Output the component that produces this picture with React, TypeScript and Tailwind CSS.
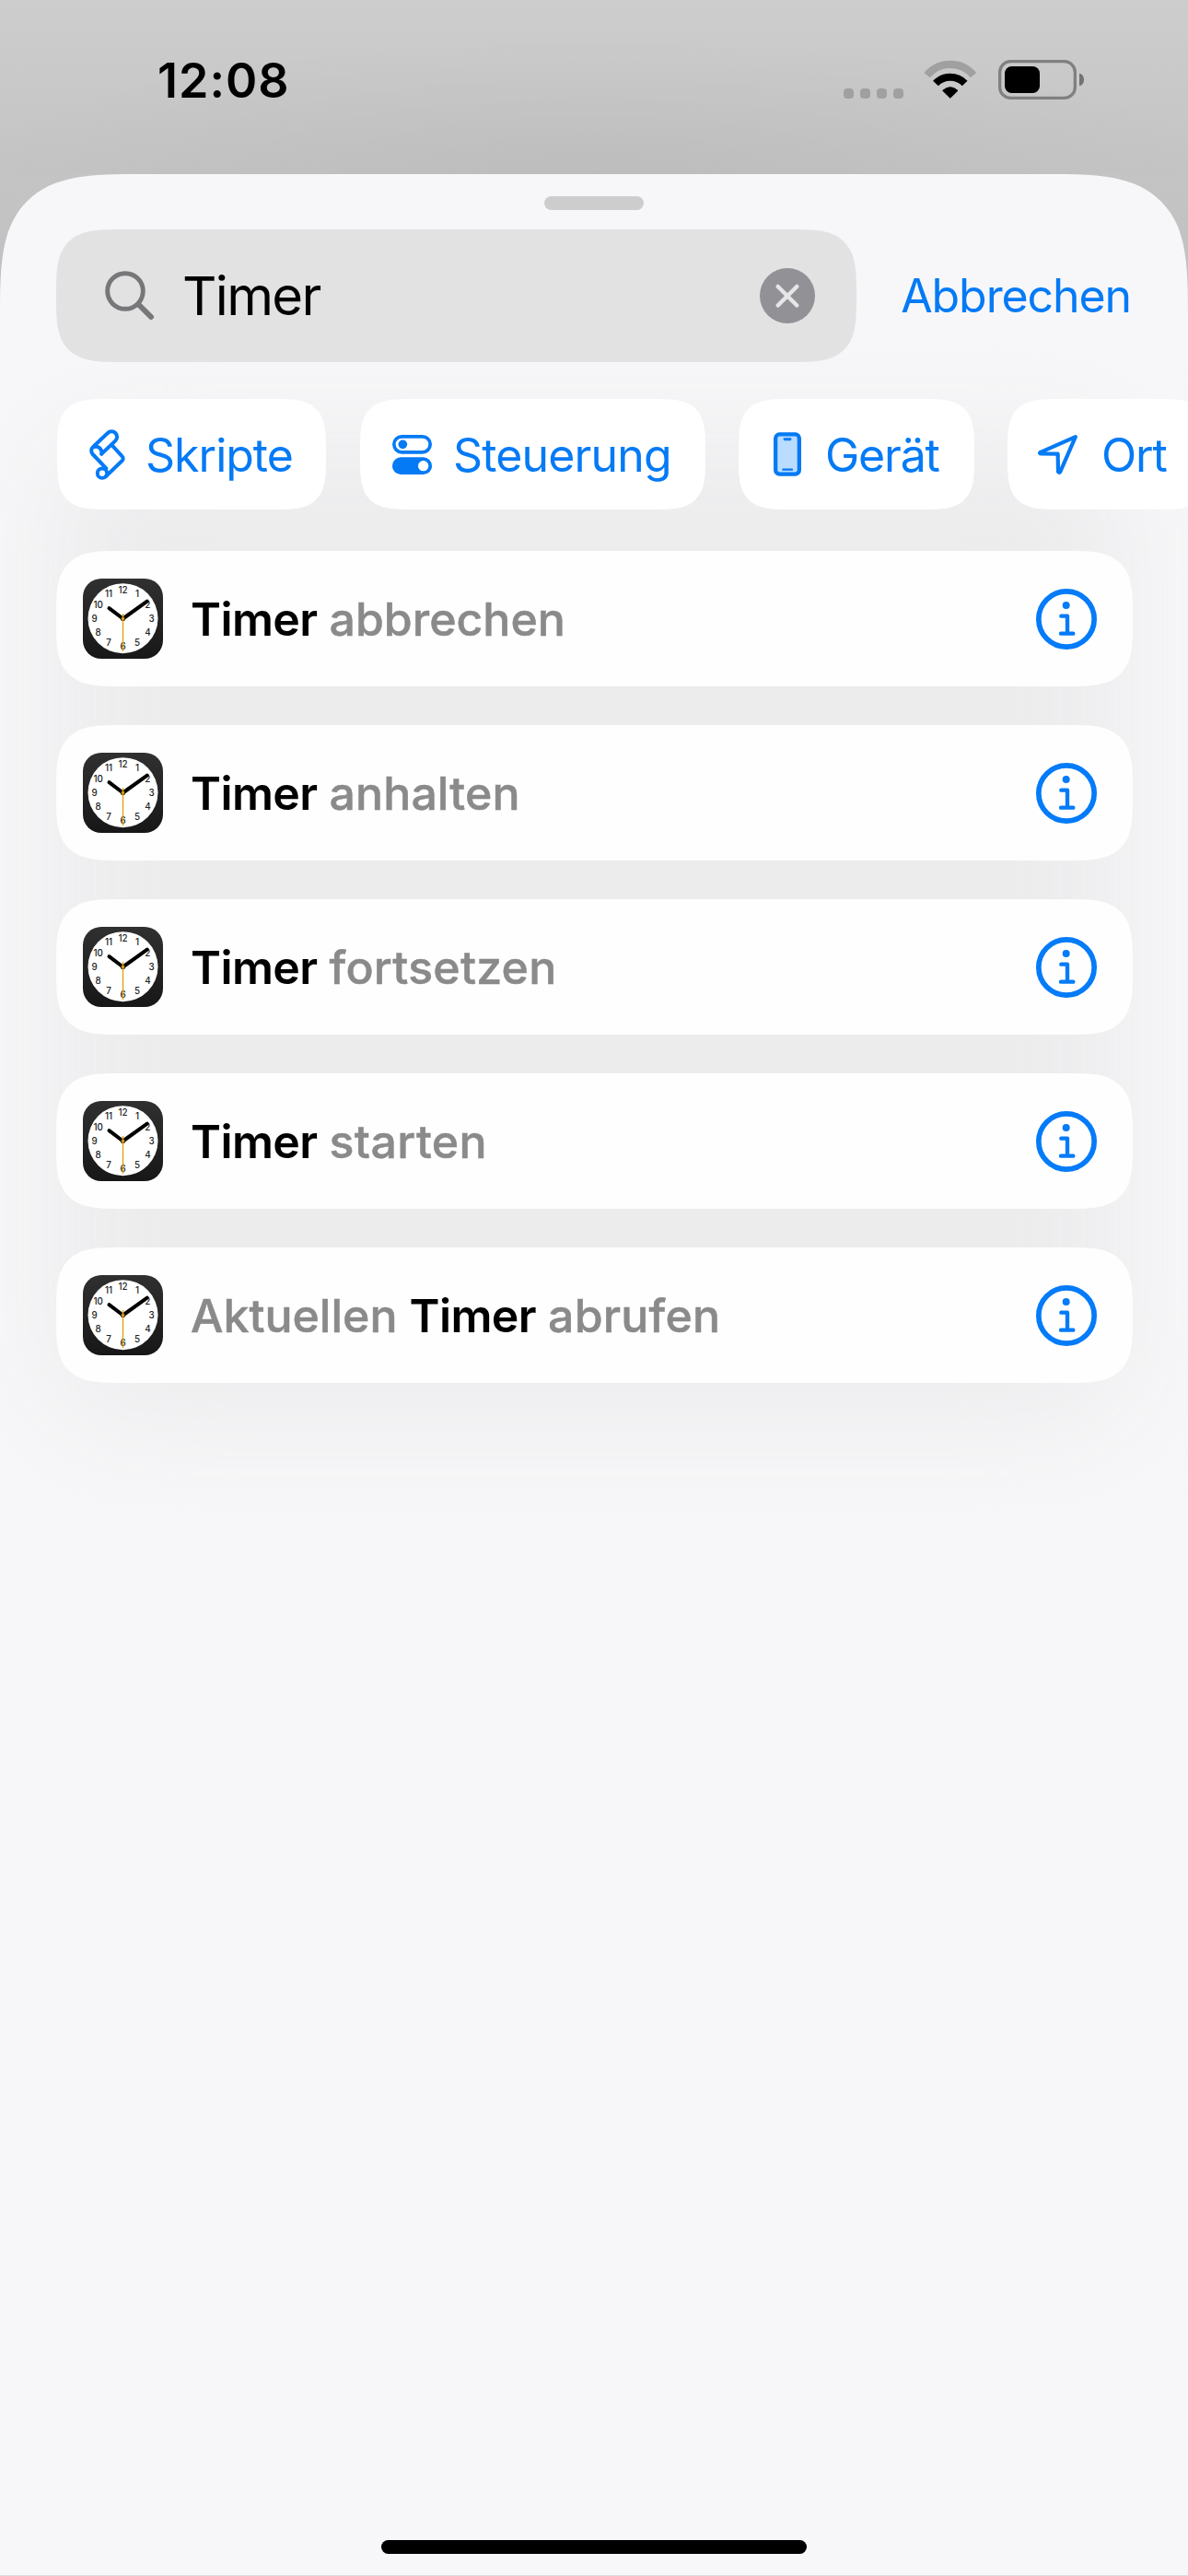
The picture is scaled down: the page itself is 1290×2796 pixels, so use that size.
import type { ReactNode } from 'react';

const BLUE = '#057af5';

function SignalDots() {
  return (
    <div className="flex h-[42px] items-end gap-[7px]">
      {[0, 1, 2, 3].map((i) => (
        <span key={i} className="size-[11px] rounded-[4px] bg-[#a0a0a1]" />
      ))}
    </div>
  );
}

function WifiIcon() {
  return (
    <svg viewBox="11 195 174 129" className="h-[43px] w-[58px]" fill="none">
      <path d="M22 244.7A98.5 98.5 0 0 1 173 244.7" stroke="#a0a0a1" strokeWidth="25" />
      <path d="M50 271.7A66 66 0 0 1 145 271.7" stroke="#000" strokeWidth="24" />
      <path
        d="M97.5 319L73 295Q97.5 273 122 295Z"
        fill="#000"
        stroke="#000"
        strokeWidth="3"
        strokeLinejoin="round"
      />
    </svg>
  );
}

function BatteryIcon() {
  return (
    <svg viewBox="252 195 279 129" className="h-[43px] w-[93px]" fill="none">
      <rect x="257" y="200" width="245" height="119" rx="35" stroke="#808081" strokeWidth="10" />
      <rect x="273" y="216" width="114" height="87" rx="23" fill="#000" />
      <path d="M516 239C526 241 531 249 531 259.500S526 278 516 280Z" fill="#737374" />
    </svg>
  );
}

function StatusBar() {
  return (
    <header className="flex h-[189px] items-start justify-between bg-[radial-gradient(ellipse_55%_80%_at_50%_100%,rgba(0,0,0,0.04),transparent)] pt-[65px] pr-[113px] pl-[171px]">
      <div className="pt-px text-[52px] leading-[43px] font-semibold tracking-[1px] text-black">12:08</div>
      <div className="flex items-start">
        <SignalDots />
        <div className="ml-[22px] flex">
          <WifiIcon />
        </div>
        <div className="ml-[23px] flex">
          <BatteryIcon />
        </div>
      </div>
    </header>
  );
}

function SearchIcon() {
  return (
    <svg viewBox="0 0 54 54" className="size-[54px]" fill="none" stroke="#777779" strokeLinecap="round">
      <circle cx="22" cy="22" r="19.300" strokeWidth="4.900" />
      <path d="M36.500 36.500L50 50" strokeWidth="6" />
    </svg>
  );
}

function ClearIcon() {
  return (
    <svg viewBox="0 0 60 60" className="size-[60px]" fill="none">
      <circle cx="30" cy="30" r="30" fill="#929296" />
      <path d="M19.700 20L40.300 40.500M40.300 20L19.700 40.500" stroke="#e6e6e7" strokeWidth="4.500" strokeLinecap="round" />
    </svg>
  );
}

function ScriptIcon() {
  return (
    <svg
      viewBox="171 137 117 165"
      className="h-[55px] w-[39px]"
      fill="none"
      stroke={BLUE}
      strokeWidth="12"
      strokeLinecap="round"
      strokeLinejoin="round"
    >
      <path d="M211 217L256 174A17.500 17.500 0 0 0 231 149L184 193A17.500 17.500 0 0 0 182 218L226 264" />
      <path d="M187 194C200 190 213 200 211 217" />
      <circle cx="213" cy="280" r="15.500" />
      <path d="M225 290L278 239A10 10 0 0 0 278 225L246 190" />
    </svg>
  );
}

function TogglesIcon() {
  return (
    <svg viewBox="137 153 129 129" className="size-[43px]" fill="none">
      <rect x="142.500" y="158.500" width="118" height="51" rx="25.500" stroke={BLUE} strokeWidth="11" />
      <circle cx="171" cy="184" r="14.500" fill={BLUE} />
      <rect x="137" y="226" width="129" height="56" rx="28" fill={BLUE} />
      <circle cx="238" cy="254" r="17" fill="#fff" />
    </svg>
  );
}

function PhoneIcon() {
  return (
    <svg viewBox="179 147 91 144" className="h-[48px] w-[30px]" fill="none">
      <rect x="185.500" y="153.500" width="78" height="131" rx="13" fill="#b9dcff" stroke={BLUE} strokeWidth="13" />
      <rect x="211" y="165" width="27" height="9" rx="4.500" fill={BLUE} />
      <rect x="207" y="266" width="36" height="6.500" rx="3" fill={BLUE} />
    </svg>
  );
}

function LocationIcon() {
  return (
    <svg viewBox="1041 156 129 129" className="size-[43px]" fill="none">
      <path
        d="M1163.500 162.500L1048 213.500Q1046 217 1050 217L1106 218L1107 276Q1111 281 1114 276Z"
        stroke={BLUE}
        strokeWidth="12.500"
        strokeLinejoin="round"
      />
    </svg>
  );
}

function InfoIcon() {
  return (
    <svg viewBox="195 147 198 198" className="size-[66px]" fill="none" stroke="#047bf8">
      <circle cx="294" cy="246" r="90.500" strokeWidth="17" />
      <circle cx="293" cy="201" r="12" fill="#047bf8" stroke="none" />
      <path d="M277 236H297V293M276 293H316" strokeWidth="13" strokeLinecap="round" strokeLinejoin="round" />
    </svg>
  );
}

function ClockIcon() {
  return (
    <svg viewBox="-43.500 -43.500 87 87" className="size-[87px]">
      <defs>
        <linearGradient id="clock-case" x1="0" y1="0" x2="0" y2="1">
          <stop offset="0" stopColor="#303031" />
          <stop offset="1" stopColor="#171718" />
        </linearGradient>
      </defs>
      <rect x="-43.500" y="-43.500" width="87" height="87" rx="20" fill="url(#clock-case)" />
      <circle r="38" cy="-0.300" fill="#fff" />
      <g fontFamily="Inter, sans-serif" fontSize="9.800" fontWeight="500" fill="#222" textAnchor="middle">
        {Array.from({ length: 12 }, (_, i) => {
          const n = i + 1;
          const a = (n * Math.PI) / 6;
          return (
            <text key={n} x={31 * Math.sin(a)} y={-30.5 * Math.cos(a) + 3.3}>
              {n}
            </text>
          );
        })}
      </g>
      <g stroke="#000" strokeLinecap="round" strokeWidth="4">
        <path d="M0 0L-15 -11.300" />
        <path d="M0 0L26.300 -18.800" />
      </g>
      <circle r="2.600" fill="#2a2208" />
      <path d="M0 -5.500V35.500" stroke="#dfa418" strokeWidth="1.400" />
      <circle r="1.600" fill="#dfa418" />
    </svg>
  );
}

function Chip({ className, children }: { className: string; children: ReactNode }) {
  return (
    <button
      type="button"
      className={`flex h-[120px] shrink-0 items-center rounded-[56px] bg-white text-[50px] leading-none text-[#057af5] [corner-shape:superellipse(1.7)] ${className}`}
    >
      {children}
    </button>
  );
}

type Part = { text: string; match?: boolean; tracking: string };

const T: Part = { text: 'Timer', match: true, tracking: 'tracking-[-0.6px]' };

const actions: Part[][] = [
  [T, { text: 'abbrechen', tracking: 'tracking-[0px]' }],
  [T, { text: 'anhalten', tracking: 'tracking-[0.1px]' }],
  [T, { text: 'fortsetzen', tracking: 'tracking-[0.25px]' }],
  [T, { text: 'starten', tracking: 'tracking-[0.4px]' }],
  [{ text: 'Aktuellen', tracking: 'tracking-[0px]' }, T, { text: 'abrufen', tracking: 'tracking-[0.2px]' }],
];

function ActionRow({ parts }: { parts: Part[] }) {
  return (
    <li className="flex h-[147px] items-center rounded-[70px] bg-[#fefefe] pr-[39px] pl-[29px] [corner-shape:superellipse(1.7)]">
      <ClockIcon />
      <div className="ml-[30px] flex flex-1 gap-[13px] text-[50px] leading-none">
        {parts.map((p) => (
          <span
            key={p.text}
            className={`${p.match ? 'font-semibold text-black' : 'font-medium text-[#8a8a8b] [-webkit-text-stroke:0.5px]'} ${p.tracking}`}
          >
            {p.text}
          </span>
        ))}
      </div>
      <InfoIcon />
    </li>
  );
}

export default function App() {
  return (
    <div className="flex h-[2796px] w-[1290px] flex-col overflow-hidden bg-[linear-gradient(to_bottom,#cdcdce_0px,#c4c4c5_189px,#c0c0c1_350px)] font-['Inter',sans-serif]">
      <StatusBar />
      <main className="relative isolate flex flex-1 flex-col overflow-hidden rounded-t-[153px] bg-[#f7f7f9] [corner-shape:superellipse(1.7)]">
        <div className="absolute top-[290px] right-[70px] left-[60px] -z-10 h-[1060px] rounded-[80px] bg-[#ececed] blur-[55px]" />

        <div className="mt-[24px] h-[15px] w-[108px] self-center rounded-full bg-[#cdcdce]" />

        <div className="mt-[21px] flex items-center justify-between pr-[62px] pl-[61px]">
          <div className="flex h-[144px] w-[869px] items-center rounded-[70px] bg-[#e2e2e3] pr-[45px] pl-[53px] [corner-shape:superellipse(1.7)]">
            <SearchIcon />
            <div className="ml-[30px] flex-1 text-[58px] leading-none tracking-[-1.65px] text-black">Timer</div>
            <ClearIcon />
          </div>
          <button type="button" className="text-[50px] leading-none tracking-[-1.1px] text-[#057af5]">
            Abbrechen
          </button>
        </div>

        <nav className="mt-[40px] flex gap-[36px] pl-[62px]">
          <Chip className="mr-px w-[292px] gap-[22px] pl-[35px] tracking-[-1px]">
            <ScriptIcon />
            <span className="pt-[2px]">Skripte</span>
          </Chip>
          <Chip className="w-[375px] gap-[23px] pl-[35px] tracking-[-0.85px]">
            <TogglesIcon />
            <span className="pt-[2px]">Steuerung</span>
          </Chip>
          <Chip className="w-[256px] gap-[26px] pl-[38px] tracking-[-1.2px]">
            <PhoneIcon />
            <span className="pt-[2px]">Gerät</span>
          </Chip>
          <Chip className="w-[220px] gap-[26px] pl-[33px] tracking-[-1.2px]">
            <LocationIcon />
            <span className="pt-[2px]">Ort</span>
          </Chip>
        </nav>

        <ul className="mt-[45px] flex flex-col gap-[42px] pr-[60px] pl-[61px]">
          {actions.map((parts, i) => (
            <ActionRow key={i} parts={parts} />
          ))}
        </ul>

        <div className="mt-auto mb-[23px] h-[15px] w-[462px] self-center rounded-full bg-black" />
        <div className="h-px w-full bg-[#dcdcde]" />
      </main>
    </div>
  );
}
